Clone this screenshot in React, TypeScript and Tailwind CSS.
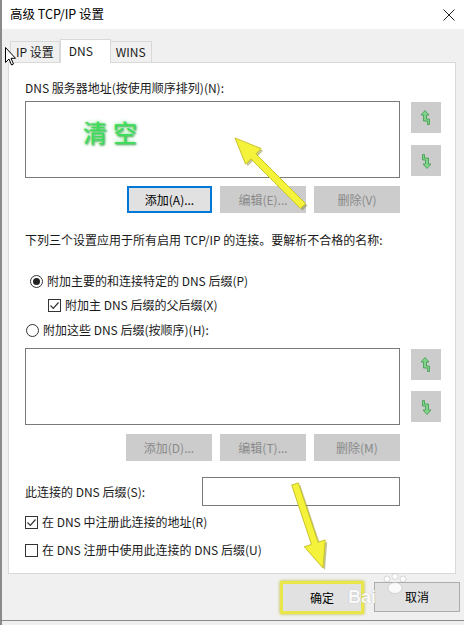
import React from "react";

const FONT = { fontFamily: '"Noto Sans CJK SC", "Noto Sans", sans-serif' };

// arrow polygon from tail to tip
const arrowPoints = (x1: number, y1: number, x2: number, y2: number, shaft = 3.5, headW = 11, headL = 26) => {
  const dx = x2 - x1;
  const dy = y2 - y1;
  const len = Math.hypot(dx, dy);
  const ux = dx / len;
  const uy = dy / len;
  const nx = -uy;
  const ny = ux;
  const bx = x2 - ux * headL;
  const by = y2 - uy * headL;
  const pts = [
    [x1 + nx * shaft, y1 + ny * shaft],
    [bx + nx * shaft, by + ny * shaft],
    [bx + nx * headW, by + ny * headW],
    [x2, y2],
    [bx - nx * headW, by - ny * headW],
    [bx - nx * shaft, by - ny * shaft],
    [x1 - nx * shaft, y1 - ny * shaft],
  ];
  return pts.map((p) => p.map((v) => v.toFixed(1)).join(",")).join(" ");
};

const MoveBtn = ({ down }: { down?: boolean }) => (
  <div className="w-[30px] h-[31px] bg-[#cccccc] flex items-center justify-center">
    <svg width="10" height="16" viewBox="0 0 10 16" className={down ? "rotate-180" : ""}>
      <path
        d="M4 0.5 L8 5 H5.5 V9 H8.5 V14.5 H6.5 V11 H2.5 V5 H0 Z"
        fill="#7fd38a"
        stroke="#3c9a4a"
        strokeWidth="0.8"
        strokeLinejoin="round"
      />
    </svg>
  </div>
);

const Btn = ({ label, focus }: { label: string; focus?: boolean }) =>
  focus ? (
    <div className="w-[85px] h-[27px] bg-[#e1e1e1] border-2 border-[#0078d7] flex items-center justify-center text-[12px] text-black">
      {label}
    </div>
  ) : (
    <div className="w-[86px] h-[27px] bg-[#cccccc] flex items-center justify-center text-[12px] text-[#8a8a8a]">
      {label}
    </div>
  );

const Check = ({ checked }: { checked?: boolean }) => (
  <div className="w-[13px] h-[13px] border border-[#333] bg-white flex items-center justify-center shrink-0">
    {checked && (
      <svg width="11" height="11" viewBox="0 0 11 11">
        <path d="M1.5 5.5 L4.3 8.3 L9.5 2.5" fill="none" stroke="#333" strokeWidth="1.2" />
      </svg>
    )}
  </div>
);

const Radio = ({ checked }: { checked?: boolean }) => (
  <div className="w-[13px] h-[13px] rounded-full border border-[#333] bg-white flex items-center justify-center shrink-0">
    {checked && <div className="w-[7px] h-[7px] rounded-full bg-[#222]" />}
  </div>
);

export default function App() {
  return (
    <div
      className="relative w-[464px] h-[625px] bg-[#f0f0f0] overflow-hidden text-[12px] text-[#1a1a1a] border-l-2 border-[#8a8a8a]"
      style={FONT}
    >
      {/* title bar */}
      <div className="h-[29px] bg-white flex items-center justify-between pl-[8px] pr-[8px]">
        <span className="text-[12.5px] text-black">高级 TCP/IP 设置</span>
        <svg width="12" height="12" viewBox="0 0 12 12" className="mr-[1px]">
          <path d="M0.5 0.5 L11.5 11.5 M11.5 0.5 L0.5 11.5" stroke="#222" strokeWidth="1" />
        </svg>
      </div>

      {/* tabs */}
      <div className="flex items-end pl-[8px] pt-[9px] h-[33px]">
        <div className="h-[21px] px-[5px] border border-b-0 border-[#d9d9d9] bg-[#f0f0f0] flex items-center">IP 设置</div>
        <div className="h-[24px] w-[51px] pl-[8px] bg-white border border-b-0 border-[#d9d9d9] flex items-start pt-[2px] -mb-px relative z-10">
          DNS
        </div>
        <div className="h-[21px] px-[5px] border border-b-0 border-l-0 border-[#d9d9d9] bg-[#f0f0f0] flex items-center">WINS</div>
      </div>

      {/* panel */}
      <div className="ml-[6px] w-[448px] h-[512px] bg-white border border-[#d9d9d9] pl-[16px] pt-[17px]">
        <div className="h-[16px] leading-[16px]">DNS 服务器地址(按使用顺序排列)(N):</div>
        <div className="flex mt-[5px]">
          <div className="relative w-[375px] h-[77px] border border-[#7a7a7a] bg-white">
            <span
              className="absolute left-[57px] top-[16px] text-[24px] leading-[28px] tracking-[6px] text-[#3ddc5a]"
              style={{ textShadow: "0 0 4px #7be08a, 1px 1px 2px #2a8a3a" }}
            >
              清空
            </span>
          </div>
          <div className="ml-[11px] flex flex-col gap-[12px] pt-[1px]">
            <MoveBtn />
            <MoveBtn down />
          </div>
        </div>
        <div className="w-[375px] flex justify-end gap-[8px] mt-[8px]">
          <Btn label="添加(A)..." focus />
          <Btn label="编辑(E)..." />
          <Btn label="删除(V)" />
        </div>

        <div className="mt-[19px] h-[16px] leading-[16px]">下列三个设置应用于所有启用 TCP/IP 的连接。要解析不合格的名称:</div>

        <div className="mt-[25px] flex items-center gap-[4px] h-[16px] pl-[5px]">
          <Radio checked />
          <span>附加主要的和连接特定的 DNS 后缀(P)</span>
        </div>
        <div className="mt-[8px] flex items-center gap-[4px] h-[16px] pl-[23px]">
          <Check checked />
          <span>附加主 DNS 后缀的父后缀(X)</span>
        </div>
        <div className="mt-[9px] flex items-center gap-[4px] h-[16px] pl-[1px]">
          <Radio />
          <span>附加这些 DNS 后缀(按顺序)(H):</span>
        </div>

        <div className="flex mt-[10px]">
          <div className="w-[375px] h-[77px] border border-[#7a7a7a] bg-white" />
          <div className="ml-[11px] flex flex-col gap-[11px] pt-[1px]">
            <MoveBtn />
            <MoveBtn down />
          </div>
        </div>
        <div className="w-[375px] flex justify-end gap-[8px] mt-[9px]">
          <Btn label="添加(D)..." />
          <Btn label="编辑(T)..." />
          <Btn label="删除(M)" />
        </div>

        <div className="w-[375px] flex items-center justify-between mt-[16px]">
          <span>此连接的 DNS 后缀(S):</span>
          <div className="w-[198px] h-[29px] border border-[#7a7a7a] bg-white" />
        </div>

        <div className="mt-[8px] flex items-center gap-[4px] h-[16px]">
          <Check checked />
          <span>在 DNS 中注册此连接的地址(R)</span>
        </div>
        <div className="mt-[12px] flex items-center gap-[4px] h-[16px]">
          <Check />
          <span>在 DNS 注册中使用此连接的 DNS 后缀(U)</span>
        </div>
      </div>

      {/* bottom buttons */}
      <div className="flex justify-end gap-[10px] pr-[4px] mt-[7px]">
        <div className="w-[84px] h-[33px] border-[3px] border-[#e8e64a] shadow-[0_0_3px_#b8b632] flex items-center justify-center bg-[#e1e1e1]">
          <span className="text-black">确定</span>
        </div>
        <div className="w-[86px] h-[30px] mt-[1px] border border-[#adadad] bg-[#e1e1e1] flex items-center justify-center text-black">
          取消
        </div>
      </div>

      {/* bottom window edge */}
      <div className="absolute left-0 right-0 top-[620px] h-px bg-[#8a8a8a]" />

      {/* watermark */}
      <div
        className="absolute left-[346px] top-[587px] text-[18px] font-bold leading-[20px] text-white opacity-80"
        style={{ textShadow: "0 0 1px #999", fontFamily: '"Liberation Sans", sans-serif' }}
      >
        Bai
      </div>
      <svg className="absolute left-[378px] top-[573px] pointer-events-none" width="30" height="22" viewBox="0 0 30 22">
        <g fill="white" stroke="#bbb" strokeWidth="0.6" opacity="0.85">
          <circle cx="7" cy="6" r="3" />
          <circle cx="15" cy="3.5" r="3" />
          <circle cx="23" cy="6" r="3" />
          <ellipse cx="15" cy="15" rx="7" ry="5.5" />
        </g>
      </svg>

      {/* annotation arrows */}
      <svg className="absolute inset-0 pointer-events-none" width="464" height="625">
        <polygon points={arrowPoints(301, 206, 233, 138)} fill="#8a8a30" opacity="0.5" transform="translate(2,2)" />
        <polygon points={arrowPoints(301, 206, 233, 138)} fill="#f4f23a" stroke="#c9c42a" strokeWidth="1" />
        <polygon points={arrowPoints(293, 484, 321, 568)} fill="#8a8a30" opacity="0.5" transform="translate(2,2)" />
        <polygon points={arrowPoints(293, 484, 321, 568)} fill="#f4f23a" stroke="#c9c42a" strokeWidth="1" />
      </svg>

      {/* mouse cursor */}
      <svg className="absolute left-[3px] top-[47px]" width="12" height="19" viewBox="0 0 12 19">
        <path d="M0.5 0.5 V15.5 L4 12 L6.5 18 L8.5 17 L6 11.3 H10.5 Z" fill="white" stroke="black" strokeWidth="1" />
      </svg>
    </div>
  );
}
